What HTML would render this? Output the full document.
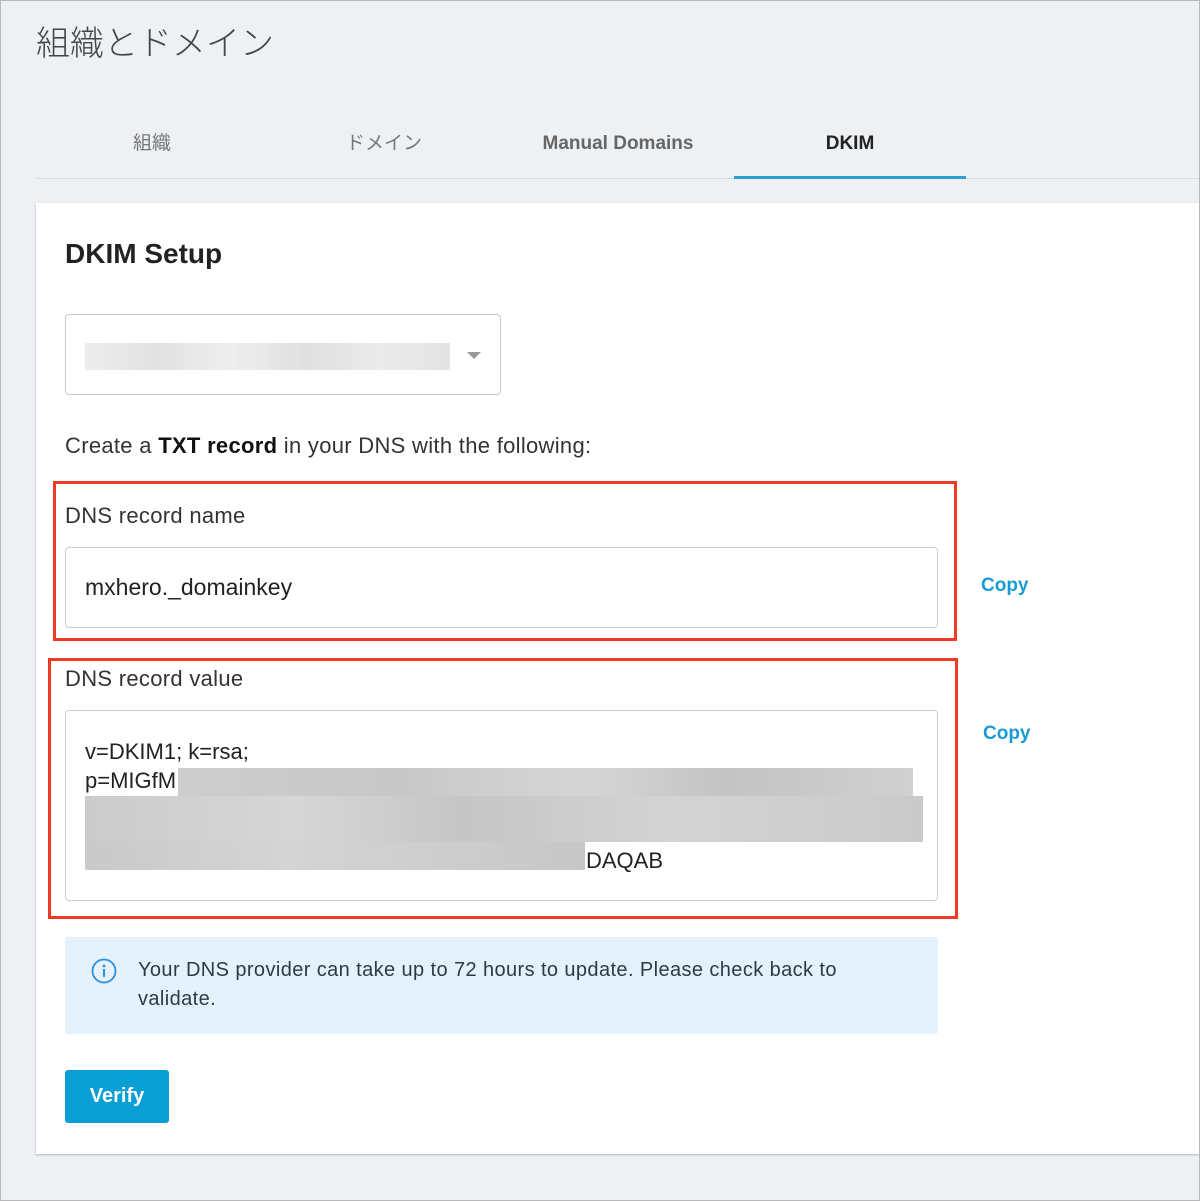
<!DOCTYPE html>
<html><head><meta charset="utf-8"><style>
*{margin:0;padding:0;box-sizing:border-box}
body{width:1200px;height:1201px;background:#eef1f4;font-family:"Liberation Sans","Noto Sans CJK JP",sans-serif;position:relative;overflow:hidden;color:#222}
.frame{position:absolute;left:0;top:0;width:1200px;height:1201px;border:1px solid #b8b8b8;pointer-events:none;z-index:5}
.a{position:absolute}
.tab{position:absolute;top:128px;height:28px;line-height:28px;font-size:19px;color:#666;text-align:center;width:232px}
.red{position:absolute;border:3px solid #f03a26}
.inp{position:absolute;border:1px solid #ccc;border-radius:4px;background:#fff}
.copy{position:absolute;color:#1a9ad6;font-size:19px;font-weight:bold}
.blur{position:absolute;background:#d2d2d2}
</style></head><body>
<div class="frame"></div>
<div class="a" style="left:36px;top:17px;font-size:34px;line-height:48px;color:#444;font-family:'Noto Sans CJK JP',sans-serif;font-weight:300">組織とドメイン</div>
<div class="tab" style="left:36px;font-family:'Noto Sans CJK JP',sans-serif;color:#777">組織</div>
<div class="tab" style="left:268px;font-family:'Noto Sans CJK JP',sans-serif;color:#777">ドメイン</div>
<div class="tab" style="left:502px;top:130px;font-weight:bold;color:#666">Manual Domains</div>
<div class="tab" style="left:734px;top:130px;font-weight:bold;color:#222">DKIM</div>
<div class="a" style="left:36px;top:178px;width:1164px;height:1px;background:#d8dbde"></div>
<div class="a" style="left:734px;top:176px;width:232px;height:3px;background:#2a9fd0"></div>
<div class="a" style="left:36px;top:203px;width:1163px;height:951px;background:#fff;box-shadow:0 1px 2px rgba(0,0,0,.25)"></div>
<div class="a" style="left:65px;top:238px;font-size:28px;font-weight:bold;color:#222">DKIM Setup</div>
<div class="inp" style="left:65px;top:314px;width:436px;height:81px;border-color:#c8c8c8"></div>
<div class="a" style="left:85px;top:343px;width:365px;height:27px;background:linear-gradient(90deg,#ececec,#e2e2e2 20%,#eee 40%,#e0e0e0 60%,#eaeaea 80%,#e4e4e4)"></div>
<div class="a" style="left:467px;top:352px;border-left:7px solid transparent;border-right:7px solid transparent;border-top:7px solid #999"></div>
<div class="a" style="left:65px;top:433px;font-size:22px;color:#333;letter-spacing:0.3px">Create a <b style="color:#111">TXT record</b> in your DNS with the following:</div>
<div class="red" style="left:53px;top:481px;width:904px;height:160px"></div>
<div class="a" style="left:65px;top:503px;font-size:22px;color:#333;letter-spacing:0.3px">DNS record name</div>
<div class="inp" style="left:65px;top:547px;width:873px;height:81px"></div>
<div class="a" style="left:85px;top:574px;font-size:23px;color:#222">mxhero._domainkey</div>
<div class="copy" style="left:981px;top:575px">Copy</div>
<div class="red" style="left:48px;top:658px;width:910px;height:261px"></div>
<div class="a" style="left:65px;top:666px;font-size:22px;color:#333;letter-spacing:0.3px">DNS record value</div>
<div class="inp" style="left:65px;top:710px;width:873px;height:191px"></div>
<div class="a" style="left:85px;top:737px;font-size:22px;color:#222;line-height:29px">v=DKIM1; k=rsa;<br>p=MIGfM</div>
<div class="blur" style="left:178px;top:768px;width:735px;height:28px;background:linear-gradient(90deg,#cdcdcd,#c8c8c8 30%,#d5d5d5 55%,#c4c4c4 75%,#d0d0d0)"></div>
<div class="blur" style="left:85px;top:796px;width:838px;height:46px;background:linear-gradient(90deg,#cbcbcb,#d6d6d6 25%,#c6c6c6 45%,#d3d3d3 70%,#cacaca)"></div>
<div class="blur" style="left:85px;top:842px;width:500px;height:28px;background:linear-gradient(90deg,#c9c9c9,#d4d4d4 40%,#c7c7c7)"></div>
<div class="a" style="left:586px;top:848px;font-size:22px;color:#222">DAQAB</div>
<div class="copy" style="left:983px;top:723px">Copy</div>
<div class="a" style="left:65px;top:937px;width:873px;height:97px;background:#e5f1fb;border-radius:3px"></div>
<svg class="a" style="left:91px;top:958px" width="26" height="26" viewBox="0 0 26 26"><circle cx="13" cy="13" r="11.5" fill="none" stroke="#2a8fe0" stroke-width="1.8"/><circle cx="13" cy="8" r="1.4" fill="#2a8fe0"/><rect x="12" y="11" width="2" height="8" fill="#2a8fe0"/></svg>
<div class="a" style="left:138px;top:956px;width:730px;font-size:20px;line-height:29px;color:#2d3a4a;letter-spacing:0.4px">Your DNS provider can take up to 72 hours to update. Please check back to validate.</div>
<div class="a" style="left:65px;top:1070px;width:104px;height:53px;background:#0a9fd4;border-radius:3px;color:#fff;font-weight:bold;font-size:20px;text-align:center;line-height:52px">Verify</div>
</body></html>
